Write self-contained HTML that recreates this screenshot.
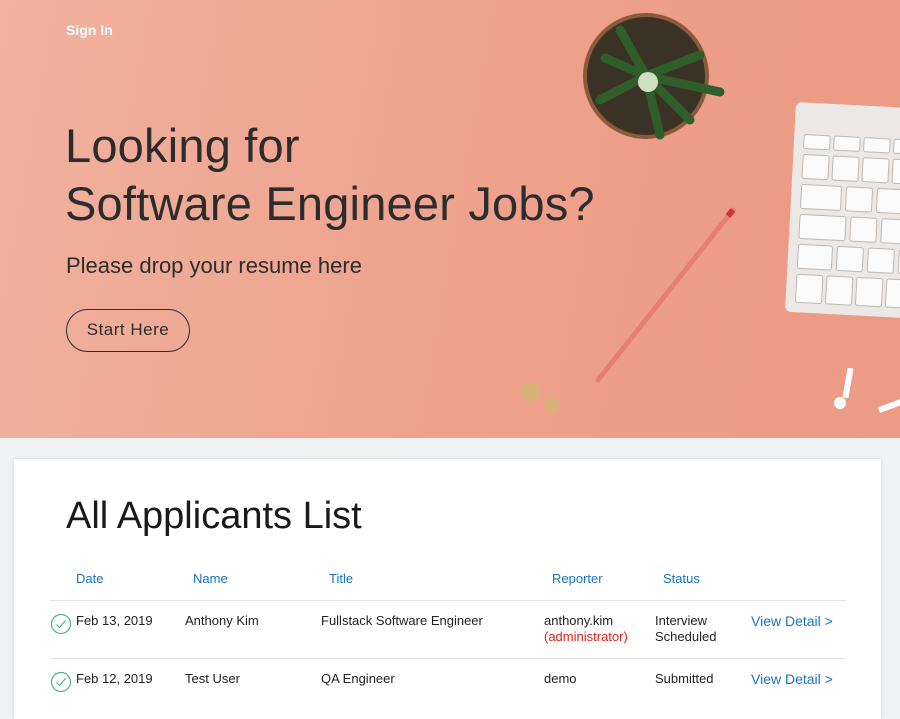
<!DOCTYPE html>
<html><head><meta charset="utf-8"><style>
*{margin:0;padding:0;box-sizing:border-box}
body{width:900px;height:699px;overflow:hidden;background:#f1f2f4;font-family:"Liberation Sans",Arial,sans-serif;position:relative}
.hero{position:absolute;left:0;top:0;width:900px;height:438px;background:linear-gradient(100deg,#f0b19f 0%,#eea08a 60%,#eb9a84 100%);overflow:hidden}
.signin{position:absolute;left:66px;top:22px;color:#fff;font-size:14px;font-weight:bold}
h1{position:absolute;left:65px;top:117px;font-weight:normal;font-size:47px;line-height:58px;color:#2c2c2c;letter-spacing:.2px}
.sub{position:absolute;left:66px;top:253px;font-size:22px;color:#2c2c2c}
.btn{position:absolute;left:66px;top:309px;width:124px;height:43px;border:1.5px solid #2c2c2c;border-radius:22px;font-size:17px;color:#2c2c2c;text-align:center;line-height:40px;letter-spacing:.5px}
.card{position:absolute;left:14px;top:459px;width:867px;height:260px;background:#fff;box-shadow:0 0 4px rgba(0,0,0,.12)}
h2{position:absolute;left:52px;top:36px;font-weight:normal;font-size:38px;color:#1a1a1a}
.t{position:absolute;font-size:13px;color:#222;line-height:16px}
.h{color:#1a73c0}
.l{color:#1a73c0;font-size:14px}
.hr{position:absolute;left:36px;width:796px;height:1px;background:#e2e2e2}
.chk{position:absolute;left:36px}
</style></head><body>
<div class="hero">
<svg width="900" height="438" style="position:absolute;left:0;top:0">
<circle cx="646" cy="76" r="63" fill="#8a5a3a"/><circle cx="646" cy="76" r="59" fill="#3a3224"/>
<g stroke="#2f5e2a" stroke-width="9" stroke-linecap="round">
<line x1="646" y1="76" x2="600" y2="100"/><line x1="646" y1="76" x2="700" y2="55"/><line x1="646" y1="76" x2="690" y2="120"/><line x1="646" y1="76" x2="620" y2="30"/><line x1="646" y1="76" x2="660" y2="135"/><line x1="646" y1="76" x2="720" y2="92"/><line x1="646" y1="76" x2="605" y2="58"/></g>
<circle cx="648" cy="82" r="10" fill="#cfe0c0"/>
<g transform="translate(796,102) rotate(3)"><rect width="130" height="210" rx="6" fill="#ebe8e6"/>
<g fill="#fbfbfb" stroke="#bdb8b5" stroke-width="1">
<rect x="10" y="32" width="26" height="14" rx="2"/><rect x="40" y="32" width="26" height="14" rx="2"/><rect x="70" y="32" width="26" height="14" rx="2"/><rect x="100" y="32" width="26" height="14" rx="2"/>
<rect x="10" y="52" width="26" height="24" rx="2"/><rect x="40" y="52" width="26" height="24" rx="2"/><rect x="70" y="52" width="26" height="24" rx="2"/><rect x="100" y="52" width="26" height="24" rx="2"/>
<rect x="10" y="82" width="40" height="24" rx="2"/><rect x="55" y="82" width="26" height="24" rx="2"/><rect x="86" y="82" width="26" height="24" rx="2"/>
<rect x="10" y="112" width="46" height="24" rx="2"/><rect x="61" y="112" width="26" height="24" rx="2"/><rect x="92" y="112" width="26" height="24" rx="2"/>
<rect x="10" y="142" width="34" height="24" rx="2"/><rect x="49" y="142" width="26" height="24" rx="2"/><rect x="80" y="142" width="26" height="24" rx="2"/><rect x="111" y="142" width="26" height="24" rx="2"/>
<rect x="10" y="172" width="26" height="28" rx="2"/><rect x="40" y="172" width="26" height="28" rx="2"/><rect x="70" y="172" width="26" height="28" rx="2"/><rect x="100" y="172" width="26" height="28" rx="2"/>
</g></g>
<line x1="733" y1="210" x2="598" y2="380" stroke="#e87e72" stroke-width="5" stroke-linecap="round"/>
<line x1="733" y1="210" x2="728" y2="216" stroke="#d83040" stroke-width="6"/>
<circle cx="530" cy="392" r="10" fill="#d8b07a"/><circle cx="552" cy="405" r="8" fill="#d8b07a"/>
<rect x="845" y="368" width="6" height="30" fill="#fff" transform="rotate(10 848 383)"/><circle cx="840" cy="403" r="6" fill="#fff"/>
<rect x="878" y="402" width="30" height="6" fill="#fff" transform="rotate(-20 893 405)"/>
</svg>
<div class="signin">Sign In</div>
<h1>Looking for<br>Software Engineer Jobs?</h1>
<div class="sub">Please drop your resume here</div>
<div class="btn">Start Here</div>
</div>
<div class="card">
<h2>All Applicants List</h2>
<div class="t h" style="left:62px;top:112px">Date</div>
<div class="t h" style="left:179px;top:112px">Name</div>
<div class="t h" style="left:315px;top:112px">Title</div>
<div class="t h" style="left:538px;top:112px">Reporter</div>
<div class="t h" style="left:649px;top:112px">Status</div>
<div class="hr" style="top:141px"></div>
<svg class="chk" style="top:154px" width="22" height="22"><circle cx="11" cy="11" r="9.5" fill="none" stroke="#4cb58a" stroke-width="1.2"/><path d="M6.5 11.5 L9.5 14.5 L15.5 7.5" fill="none" stroke="#4cb58a" stroke-width="1.2"/></svg>
<div class="t" style="left:62px;top:154px">Feb 13, 2019</div>
<div class="t" style="left:171px;top:154px">Anthony Kim</div>
<div class="t" style="left:307px;top:154px">Fullstack Software Engineer</div>
<div class="t" style="left:530px;top:154px">anthony.kim<br><span style="color:#e0201e">(administrator)</span></div>
<div class="t" style="left:641px;top:154px">Interview<br>Scheduled</div>
<div class="t l" style="left:737px;top:154px">View Detail &gt;</div>
<div class="hr" style="top:199px"></div>
<svg class="chk" style="top:212px" width="22" height="22"><circle cx="11" cy="11" r="9.5" fill="none" stroke="#4cb58a" stroke-width="1.2"/><path d="M6.5 11.5 L9.5 14.5 L15.5 7.5" fill="none" stroke="#4cb58a" stroke-width="1.2"/></svg>
<div class="t" style="left:62px;top:212px">Feb 12, 2019</div>
<div class="t" style="left:171px;top:212px">Test User</div>
<div class="t" style="left:307px;top:212px">QA Engineer</div>
<div class="t" style="left:530px;top:212px">demo</div>
<div class="t" style="left:641px;top:212px">Submitted</div>
<div class="t l" style="left:737px;top:212px">View Detail &gt;</div>
</div>
</body></html>
